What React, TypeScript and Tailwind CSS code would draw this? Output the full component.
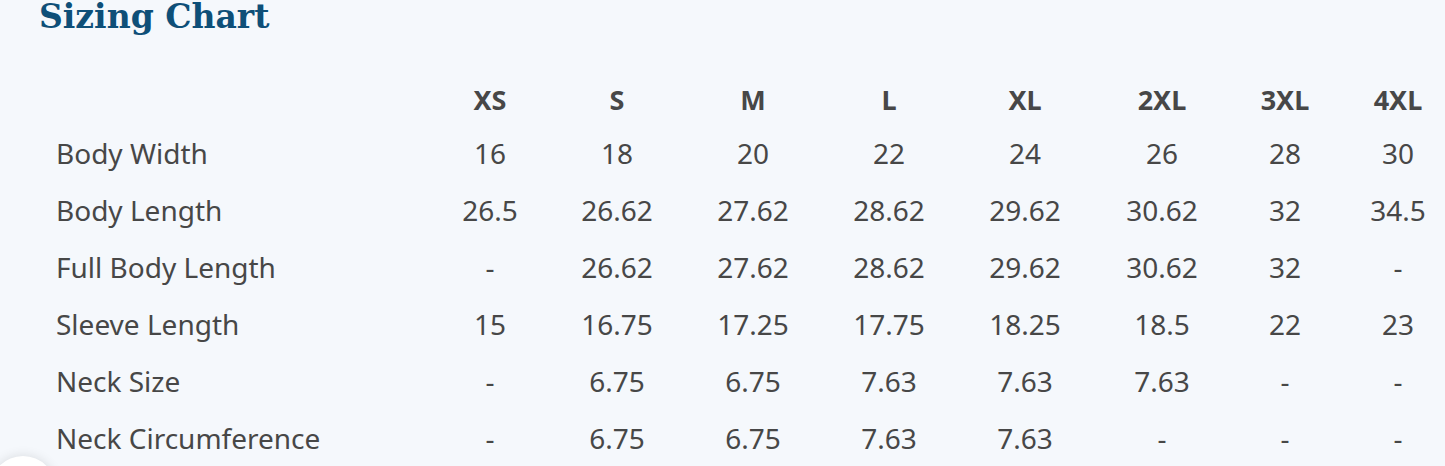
import React from 'react';

const sizes = ['XS', 'S', 'M', 'L', 'XL', '2XL', '3XL', '4XL'];

// column widths chosen so that the centred values line up with the chart
const colWidths = ['w-[126px]', 'w-[128px]', 'w-[144px]', 'w-[128px]', 'w-[144px]', 'w-[130px]', 'w-[116px]', 'w-[110px]'];

const rows: { label: string; values: string[] }[] = [
  { label: 'Body Width', values: ['16', '18', '20', '22', '24', '26', '28', '30'] },
  { label: 'Body Length', values: ['26.5', '26.62', '27.62', '28.62', '29.62', '30.62', '32', '34.5'] },
  { label: 'Full Body Length', values: ['-', '26.62', '27.62', '28.62', '29.62', '30.62', '32', '-'] },
  { label: 'Sleeve Length', values: ['15', '16.75', '17.25', '17.75', '18.25', '18.5', '22', '23'] },
  { label: 'Neck Size', values: ['-', '6.75', '6.75', '7.63', '7.63', '7.63', '-', '-'] },
  { label: 'Neck Circumference', values: ['-', '6.75', '6.75', '7.63', '7.63', '-', '-', '-'] },
];

const App: React.FC = () => {
  return (
    <div className="relative h-[466px] w-[1445px] overflow-hidden bg-[#f5f8fc]">
      <h1
        className="mt-[1px] pl-[39px] text-[33px] font-bold leading-[32px] text-[#0e4f78]"
        style={{ fontFamily: '"DejaVu Serif", serif' }}
      >
        Sizing Chart
      </h1>

      <div
        className="mt-[43px] pl-[56px] text-[28px] text-[#474747]"
        style={{ fontFamily: '"Noto Sans", sans-serif' }}
      >
        <div className="flex h-[48px] items-center">
          <div className="w-[371px] shrink-0" />
          {sizes.map((s, i) => (
            <div key={s} className={`${colWidths[i]} shrink-0 text-center text-[27px] font-bold`}>
              {s}
            </div>
          ))}
        </div>
        {rows.map((row) => (
          <div key={row.label} className="flex h-[57px] items-center">
            <div className="w-[371px] shrink-0">{row.label}</div>
            {row.values.map((v, i) => (
              <div key={i} className={`${colWidths[i]} shrink-0 text-center`}>
                {v}
              </div>
            ))}
          </div>
        ))}
      </div>

      {/* chat bubble peeking in at the bottom-left */}
      <div className="absolute -bottom-[56px] -left-[10px] h-[66px] w-[66px] rounded-full bg-white shadow-[0_0_12px_rgba(0,0,0,0.12)]" />
    </div>
  );
};

export default App;
